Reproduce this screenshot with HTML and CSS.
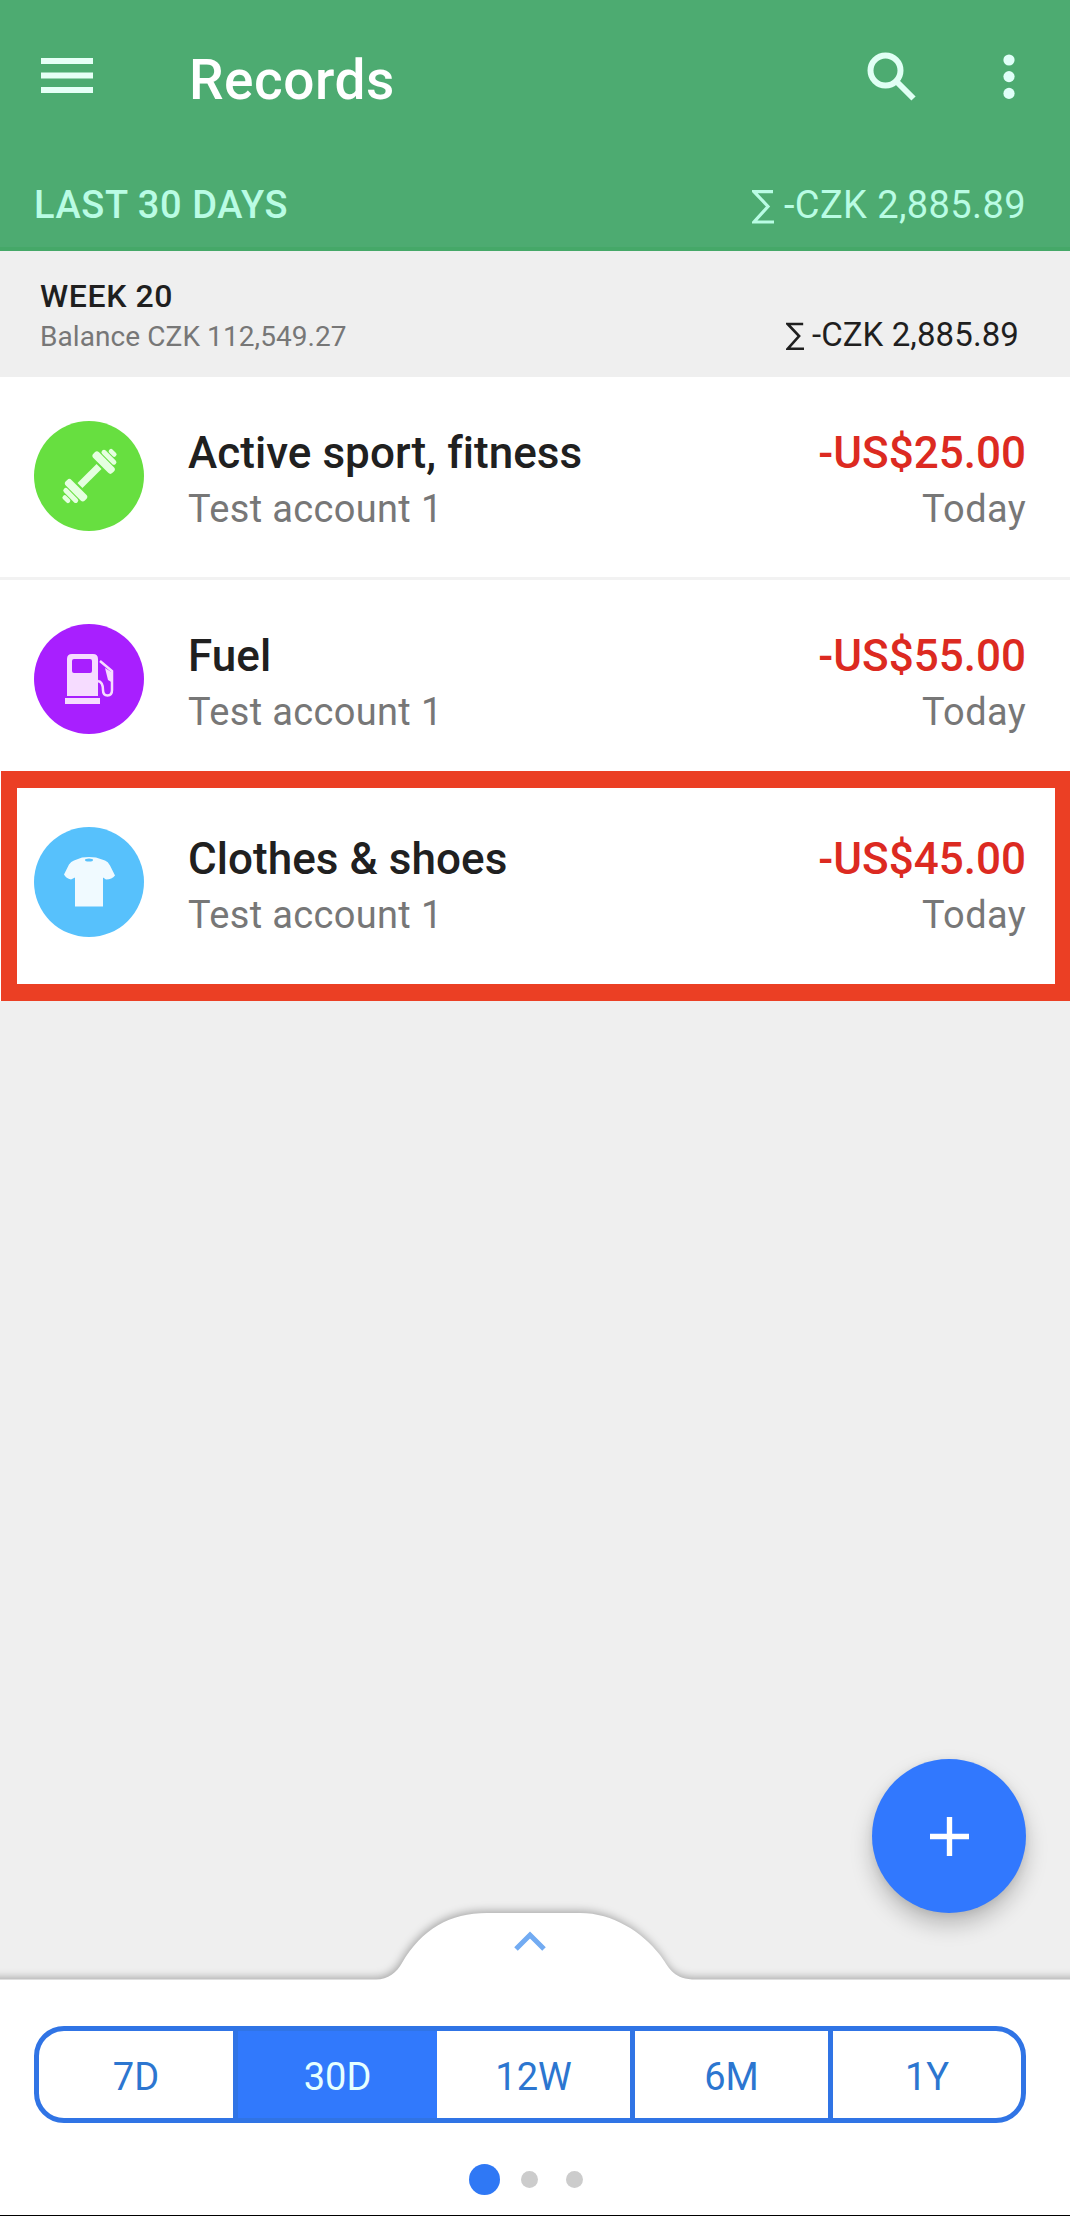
FILE: index.html
```html
<!DOCTYPE html>
<html lang="en">
<head>
<meta charset="utf-8">
<title>Records</title>
<link rel="stylesheet" href="styles.css">
</head>
<body>
<div class="app">
  <header class="header">
    <div class="toolbar">
      <svg class="menu-icon" viewBox="0 0 52 36"><path d="M0 3h52M0 17.5h52M0 32h52"/></svg>
      <h1 class="title">Records</h1>
      <svg class="search-icon" viewBox="0 0 50 50"><circle cx="18.5" cy="18.5" r="15"/><path d="M30 30L46.5 46.5"/></svg>
      <svg class="more-icon" viewBox="0 0 12 46"><circle cx="6" cy="6" r="5.6"/><circle cx="6" cy="22.6" r="5.6"/><circle cx="6" cy="39.4" r="5.6"/></svg>
    </div>
    <div class="period">
      <span class="period-name">LAST 30 DAYS</span>
      <span class="period-sum"><svg class="sigma" viewBox="0 0 22 34"><path d="M21 1.7H2L16 16.5L2 32H22"/></svg>-CZK 2,885.89</span>
    </div>
  </header>

  <section class="week">
    <div class="week-info">
      <div class="week-name">WEEK 20</div>
      <div class="week-balance">Balance CZK 112,549.27</div>
    </div>
    <div class="week-sum"><svg class="sigma" viewBox="0 0 22 34"><path d="M21 1.7H2L16 16.5L2 32H22"/></svg>-CZK 2,885.89</div>
  </section>

  <main class="records">
    <article class="record">
      <svg class="badge sport" viewBox="0 0 110 110">
        <circle cx="55" cy="55" r="55"/>
        <g class="glyph" transform="rotate(-45 55.5 55)">
          <rect x="42" y="51.5" width="27" height="7"/>
          <rect x="32" y="42" width="8" height="27" rx="3"/><rect x="26" y="46" width="5" height="19" rx="2.5"/><rect x="20.5" y="50.5" width="4.5" height="9" rx="2"/>
          <rect x="71" y="42" width="8" height="27" rx="3"/><rect x="80" y="46" width="5" height="19" rx="2.5"/><rect x="86" y="50.5" width="4.5" height="9" rx="2"/>
        </g>
      </svg>
      <div class="record-main"><div class="record-name">Active sport, fitness</div><div class="record-sub">Test account 1</div></div>
      <div class="record-side"><div class="record-amount">-US$25.00</div><div class="record-sub">Today</div></div>
    </article>
    <article class="record">
      <svg class="badge fuel" viewBox="0 0 110 110">
        <circle cx="55" cy="55" r="55"/>
        <g class="glyph">
          <path fill-rule="evenodd" d="M33 72V35q0-5 5-5h21q5 0 5 5V72zM38 37v10q0 2 2 2h16q2 0 2-2v-10q0-2-2-2H40q-2 0-2 2z"/>
          <rect x="31" y="74" width="35" height="6"/>
          <path class="hose" d="M66 37L78 47V66q0 5.500-4.500 5.500t-4.500-5.500q0-8-5-9"/>
          <path d="M71 44l8 5v10l-5-3z"/>
        </g>
      </svg>
      <div class="record-main"><div class="record-name">Fuel</div><div class="record-sub">Test account 1</div></div>
      <div class="record-side"><div class="record-amount">-US$55.00</div><div class="record-sub">Today</div></div>
    </article>
    <article class="record selected">
      <svg class="badge clothes" viewBox="0 0 110 110">
        <circle cx="55" cy="55" r="55"/>
        <path class="glyph" d="M48 30.500q7-1 14 0l9 3q3 1 5 5l5 10q-3 4-9 4l-3-2v29H41V50.500l-4 2q-5-1-7-5l5-10q2-3 5-4z"/>
        <ellipse cx="55" cy="33" rx="4" ry="1.500"/>
      </svg>
      <div class="record-main"><div class="record-name">Clothes &amp; shoes</div><div class="record-sub">Test account 1</div></div>
      <div class="record-side"><div class="record-amount">-US$45.00</div><div class="record-sub">Today</div></div>
    </article>
  </main>

  <footer class="footer">
    <svg class="sheet-edge" viewBox="0 0 1070 100">
      <path class="sheet" d="M-20 67.500H376C388 67.500 397 60 402 51C422 17 450 1 487 1H580C613 1 642 20 660 43C669 55 672 66 692 67.500H1090V130H-20z"/>
      <path class="chevron" d="M516 37L530 23L544 37"/>
    </svg>
    <div class="ranges">
      <span class="range">7D</span><span class="range active">30D</span><span class="range">12W</span><span class="range">6M</span><span class="range">1Y</span>
    </div>
    <div class="dots"><i class="dot current"></i><i class="dot"></i><i class="dot"></i></div>
  </footer>
  <button class="add" aria-label="Add"><svg viewBox="0 0 40 40"><path d="M0 20H40M20 0V40"/></svg></button>
</div>
</body>
</html>
```
FILE: styles.css
```css
* { box-sizing: border-box; }
body { margin: 0; font-family: Roboto, "Liberation Sans", sans-serif; background: #efefef; }
svg { display: block; flex: none; }
.app { position: relative; width: 1070px; height: 2216px; display: flex; flex-direction: column; overflow: hidden; border-bottom: 1px solid #000; }
.header { height: 251px; background: #4dab71; border-bottom: 4px solid #45a868; }
.toolbar { height: 160px; display: flex; align-items: center; padding: 0 55px 6px 41px; }
.menu-icon { width: 52px; height: 36px; margin-bottom: 2px; fill: none; stroke: #e6fff6; stroke-width: 6; }
.title { margin: 6px 0 0 96px; flex: 1; font-size: 55px; line-height: 64px; font-weight: 500; letter-spacing: .5px; color: #fff; }
.search-icon { width: 50px; height: 50px; margin-right: 86px; fill: none; stroke: #e0fff4; stroke-width: 6; }
.more-icon { width: 12px; height: 46px; fill: #e0fff8; }
.period { display: flex; justify-content: space-between; padding: 20px 44px 0 34px; font-size: 38px; line-height: 50px; color: #b9fce4; }
.period-name { font-weight: 500; letter-spacing: .6px; }
.period-sum { letter-spacing: .4px; }
.period-sum, .week-sum { display: flex; align-items: center; }
.sigma { width: 22px; height: 34px; margin: 4px 10px 0 0; fill: none; stroke: currentColor; stroke-width: 3.2; }
.week { height: 126px; display: flex; justify-content: space-between; padding: 26px 51px 0 40px; color: #1f1f1f; }
.week-name { font-size: 32px; line-height: 39px; font-weight: 500; letter-spacing: .6px; }
.week-balance { font-size: 28px; line-height: 42px; letter-spacing: .08px; color: #777; }
.week-sum { height: 40px; margin-top: 37px; font-size: 33px; letter-spacing: .1px; }
.week-sum .sigma { width: 18px; height: 29px; margin-right: 8px; }
.record { height: 200px; display: flex; padding: 44px 44px 0 34px; background: #fff; }
.record + .record { height: 203px; border-top: 3px solid #f2f2f2; }
.record + .record.selected { position: relative; height: 221px; border-top: 0; padding-top: 47px; }
.record.selected::after { content: ""; position: absolute; inset: -9px 0 0 1px; border: 17px solid #eb3f24; border-right-width: 15px; border-left-width: 16px; }
.badge { width: 110px; height: 110px; margin-right: 44px; }
.sport { fill: #67df40; }
.fuel { fill: #a81fff; }
.clothes { fill: #57c1fc; }
.glyph { fill: #e5ffe0; }
.fuel .glyph { fill: #f6dcff; }
.clothes .glyph { fill: #f0faff; }
.hose { fill: none; stroke: #f6dcff; stroke-width: 2.5; }
.record-main { flex: 1; }
.record-name, .record-amount { margin-top: 5px; font-size: 44px; line-height: 54px; font-weight: 500; color: #202020; }
.record-name { letter-spacing: .05px; }
.record-amount { color: #dc2a21; }
.record-sub { font-size: 38px; line-height: 58px; letter-spacing: .35px; color: #777; }
.record-side { text-align: right; }
.footer { position: relative; margin-top: auto; height: 303px; }
.sheet-edge { width: 1070px; height: 100px; overflow: visible; }
.sheet { fill: #fff; filter: drop-shadow(-1px -2px 4px rgba(0,0,0,.3)); }
.chevron { fill: none; stroke: #72abf2; stroke-width: 5; }
.footer::before { content: ""; position: absolute; inset: 99px 0 0; background: #fff; }
.ranges { position: relative; margin: 14px 44px 0 34px; height: 97px; display: grid; grid-template-columns: 199px 199px 198px 198px 1fr; border: 5px solid #3074e5; border-radius: 30px; overflow: hidden; }
.range { display: flex; align-items: center; justify-content: center; font-size: 38px; color: #2c76d0; border-right: 5px solid #3074e5; padding-top: 5px; }
.range:last-child { border-right: 0; }
.range.active { background: #3179fc; color: #e5ffff; border-right: 0; }
.dots { position: relative; display: flex; align-items: center; margin: 41px 0 0 469px; height: 31px; }
.dot { width: 17px; height: 17px; border-radius: 50%; background: #ccc; margin-right: 28px; }
.dot.current { width: 31px; height: 31px; background: #2f78f5; margin-right: 21px; }
.add { position: absolute; left: 872px; top: 1759px; width: 154px; height: 154px; padding: 0; border: 0; border-radius: 50%; background: #3178fe; display: grid; place-items: center; box-shadow: 0 12px 22px rgba(0,0,0,.22), 0 2px 8px rgba(0,0,0,.08); }
.add svg { width: 39px; height: 39px; stroke: #fff; stroke-width: 5.5; fill: none; }
```
